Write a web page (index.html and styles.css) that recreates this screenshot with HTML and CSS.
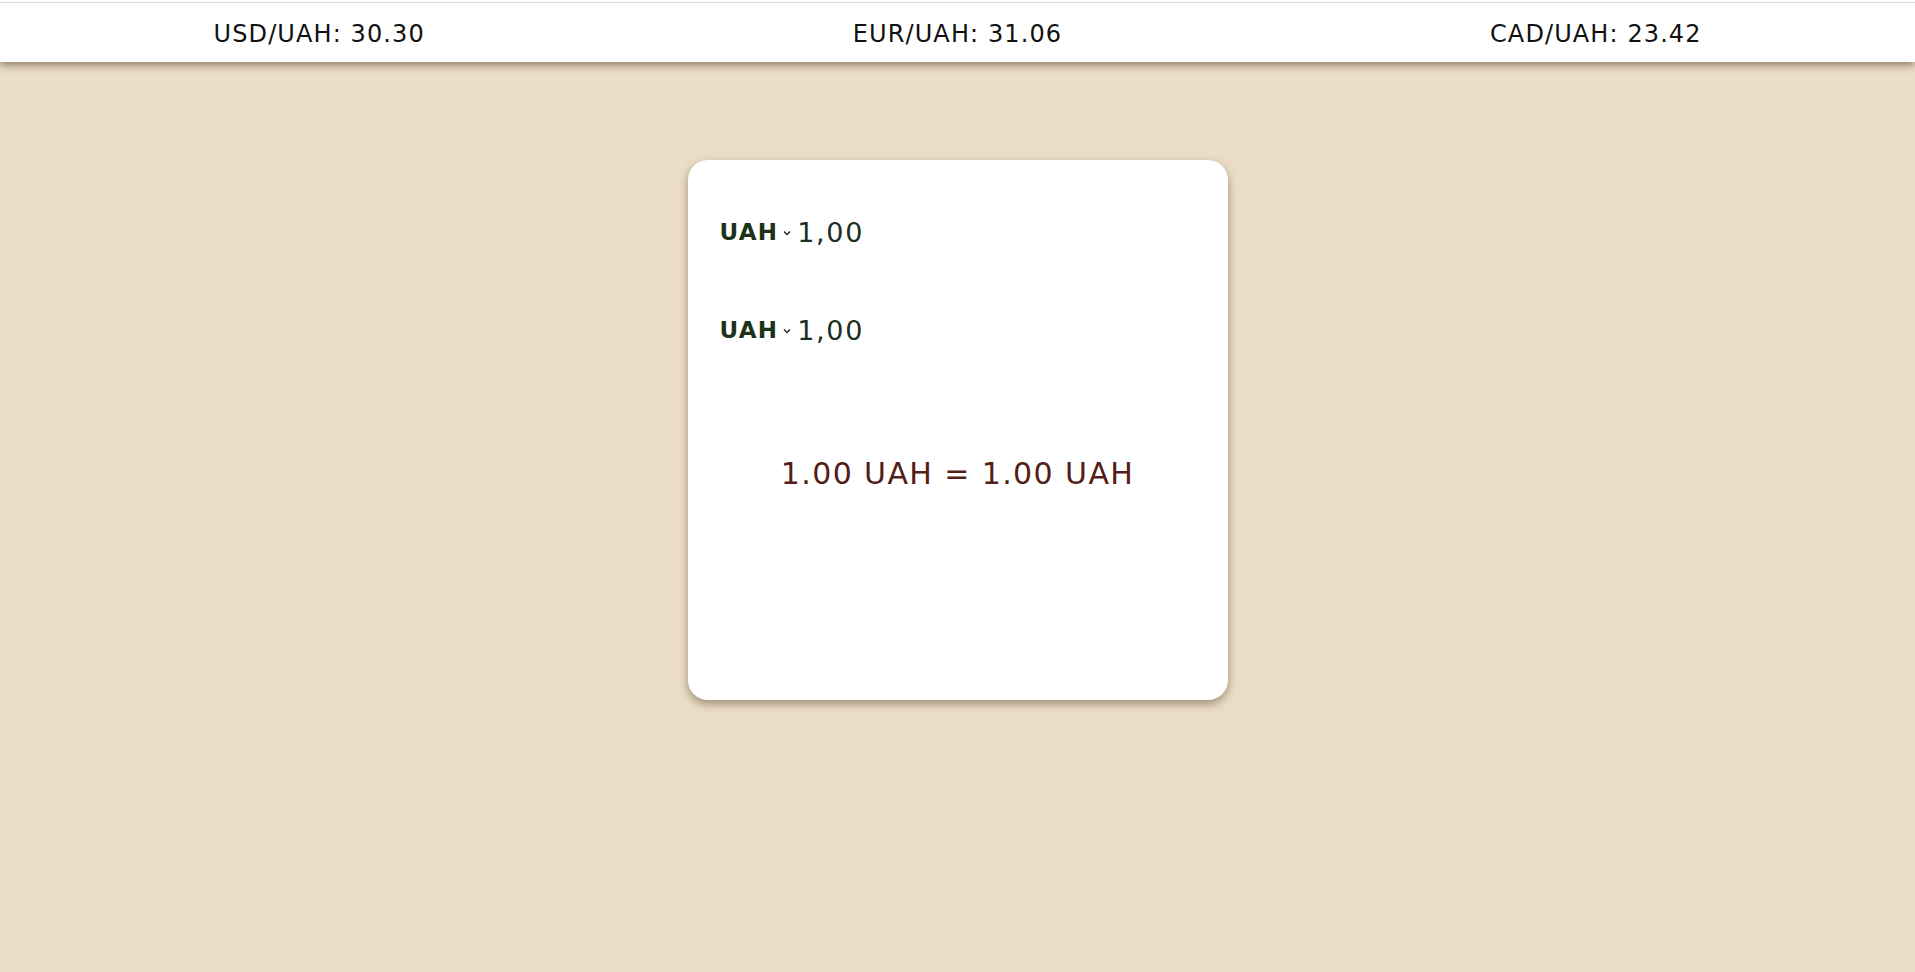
FILE: index.html
```html
<!DOCTYPE html>
<html lang="en">
<head>
<meta charset="utf-8">
<title>Currency converter</title>
<link rel="stylesheet" href="styles.css">
</head>
<body>
<header class="rates">
  <div class="rate">USD/UAH: 30.30</div>
  <div class="rate">EUR/UAH: 31.06</div>
  <div class="rate">CAD/UAH: 23.42</div>
</header>
<main class="page">
  <section class="card">
    <div class="row">
      <span class="currency">UAH</span>
      <svg class="chevron" width="8" height="6" viewBox="0 0 8 6"><polyline points="1,1.5 4,4.5 7,1.5" fill="none" stroke="#1c331a" stroke-width="1.5"/></svg>
      <span class="amount">1,00</span>
    </div>
    <div class="row row-second">
      <span class="currency">UAH</span>
      <svg class="chevron" width="8" height="6" viewBox="0 0 8 6"><polyline points="1,1.5 4,4.5 7,1.5" fill="none" stroke="#1c331a" stroke-width="1.5"/></svg>
      <span class="amount">1,00</span>
    </div>
    <div class="result">1.00 UAH = 1.00 UAH</div>
  </section>
</main>
</body>
</html>
```

FILE: styles.css
```css
html, body {
  margin: 0;
  padding: 0;
}
body {
  background: #ecddc6;
  font-family: "DejaVu Sans", Verdana, sans-serif;
  min-height: 972px;
}
.rates {
  display: grid;
  grid-template-columns: 1fr 1fr 1fr;
  align-items: center;
  height: 62px;
  box-sizing: border-box;
  padding-top: 3px;
  background: linear-gradient(#ffffff 0 2px, #dcdcdc 2px 3px, #ffffff 3px);
  box-shadow: 0 3px 8px rgba(60, 45, 25, 0.55);
  position: relative;
  z-index: 1;
}
.rate {
  text-align: center;
  font-size: 24px;
  letter-spacing: 1.1px;
  color: #111111;
  padding-top: 2px;
}
.page {
  display: flex;
  justify-content: center;
  padding-top: 98px;
}
.card {
  width: 540px;
  height: 540px;
  box-sizing: border-box;
  background: #ffffff;
  border-radius: 20px;
  box-shadow: 0 4px 10px rgba(60, 45, 25, 0.45);
  padding: 52px 32px 0;
}
.row {
  display: flex;
  align-items: center;
  height: 40px;
  color: #1c331a;
}
.row-second {
  margin-top: 58px;
}
.currency {
  font-weight: bold;
  font-size: 23px;
  letter-spacing: 1.2px;
}
.chevron {
  margin: 2px 6px 0 5px;
}
.amount {
  font-size: 27px;
  letter-spacing: 1.7px;
  color: #1c2e1c;
}
.result {
  margin-top: 104px;
  height: 40px;
  line-height: 40px;
  text-align: center;
  font-size: 30px;
  letter-spacing: 1.4px;
  color: #521e17;
}
```
